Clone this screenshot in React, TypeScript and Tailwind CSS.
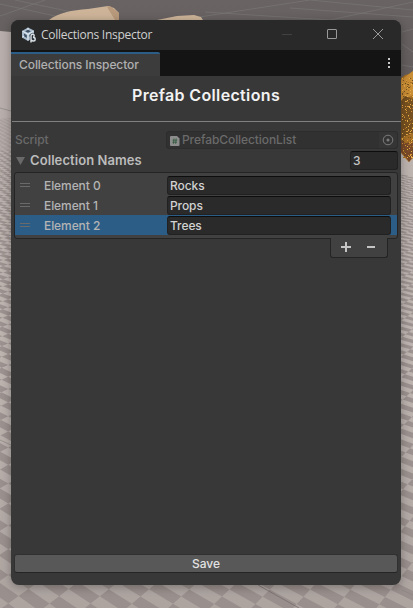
import React from "react";

// Checkered ground plane, projected with a horizon above the viewport.
function buildGround(): string {
  const horizon = -20;
  const depth = 615;
  const cx = 80;
  const project = (i: number, j: number): [number, number, number] => {
    const x = 68.5 + 22 * i - 9.3 * j;
    const y = 589 + 14.5 * i + 7.2 * j;
    const w = 1 / (1 - (y - 595) / depth);
    return [cx + (x - cx) * w, horizon + depth * w, w];
  };
  const parts: string[] = [];
  for (let i = -75; i < 30; i++) {
    for (let j = -150; j < 80; j++) {
      if ((i + j) % 2 === 0) continue;
      const p = [project(i, j), project(i + 1, j), project(i + 1, j + 1), project(i, j + 1)];
      const [x, y, w] = p[0];
      if (w <= 0 || y < 100 || y > 640 || x < -40 || x > 440) continue;
      if (x > 22 && x < 375 && y < 565) continue;
      parts.push("M" + p.map((q) => `${q[0].toFixed(1)} ${q[1].toFixed(1)}`).join("L") + "Z");
    }
  }
  return parts.join("");
}

const ground = buildGround();
const leafColors = ["#d99a3b", "#6b4a1c", "#e9b04a", "#a87328", "#7a5420"];
const leaves = Array.from({ length: 260 }, (_, n) => {
  const r = Math.abs(Math.sin(n * 12.9898) * 43758.5453) % 1;
  const s = Math.abs(Math.sin(n * 78.233) * 12543.123) % 1;
  const t = Math.abs(Math.sin(n * 39.425) * 9631.77) % 1;
  return { x: 402 + Math.floor(r * 11), y: 78 + Math.floor(s * 80), c: leafColors[Math.floor(t * 5)] };
});

function Scene() {
  return (
    <svg className="absolute inset-0" width="413" height="608" viewBox="0 0 413 608">
      <defs>
        <linearGradient id="floor" x1="0" y1="0" x2="0" y2="1">
          <stop offset="0" stopColor="#bcb3af" />
          <stop offset="0.6" stopColor="#bdb4b0" />
          <stop offset="1" stopColor="#ada4a0" />
        </linearGradient>
        <linearGradient id="sky" x1="0" y1="0" x2="0" y2="1">
          <stop offset="0" stopColor="#696463" />
          <stop offset="1" stopColor="#625d5c" />
        </linearGradient>
      </defs>
      <rect width="413" height="608" fill="url(#floor)" />
      <path d={ground} fill="#938a87" opacity="0.8" />
      <rect y="31" width="11" height="120" fill="#b3aaa7" opacity="0.5" />
      <path d="M0 0H413V76L401 82V30H11V32L0 31Z" fill="url(#sky)" />
      <g stroke="#7b7777" strokeWidth="0.8" fill="none" opacity="0.8">
        <path d="M0 4L60 17M15 0L105 19M0 16L45 0M180 20L310 0M205 12L330 20M290 8L413 17M310 0L413 10M330 20L413 2M402 32L413 29M402 44L413 52M402 65L413 67" />
      </g>
      <path d="M49 20C58 13 72 10 88 9L108 6L114 8L119 13V20Z" fill="#cdb499" />
      <path d="M107 7L110 6L119 13V20H115Z" fill="#b8997b" />
      <path d="M157 20L177 16L194 15L201 17L203 20Z" fill="#cdb499" />
      <path d="M401 78L405 75L409 74L413 71V158L409 162L406 159L401 153Z" fill="#a66f26" />
      <path d="M401 80L413 71V95L401 101Z" fill="#c98d35" />
      <path d="M401 101L405 96L413 99V133L401 138Z" fill="#765020" />
      <path d="M401 140L405 143L413 142V156L409 162L406 157L401 152Z" fill="#7a492a" />
      {leaves.map((l, n) => (
        <rect key={n} x={l.x} y={l.y} width="1" height="1" fill={l.c} />
      ))}
      <path d="M258 585L299 608" stroke="#77706e" strokeWidth="0.8" />
      <path d="M0 108L11 111M0 440L11 445M402 197L413 199M402 590L413 595" stroke="#8b8684" strokeWidth="0.7" />
    </svg>
  );
}

function UnityLogo() {
  return (
    <svg width="16" height="16" viewBox="0 0 16 16" className="shrink-0">
      <path d="M7 0.5L13 3.5V10L7 14L1 10.5V4Z" fill="#a9bccd" />
      <path d="M7 2.8L9.8 4.3L7 5.8L4.2 4.3ZM3 6.6L5.8 8.2V11L3 9.3ZM8.4 8L11 6.6V8L8.4 9.8Z" fill="#3d4f60" />
      <path d="M7 0.8V3M1.2 10.3L3.2 9M1.5 4.2L7 7.2L12.5 4.2M7 7V13.5" stroke="#e4edf5" strokeWidth="1" fill="none" />
      <path d="M10 15.4V9Q10 7.3 11.7 7.3Q13.2 7.3 13.2 8.7Q13.2 10.1 12 10.2Q14.2 10.4 14.2 12.2Q14.2 14 12.4 14Q11 14 10.2 13" fill="#27323b" stroke="#27323b" strokeWidth="2.2" />
      <path d="M10 15.4V9Q10 7.3 11.7 7.3Q13.2 7.3 13.2 8.7Q13.2 10.1 12 10.2Q14.2 10.4 14.2 12.2Q14.2 14 12.4 14Q11 14 10.2 13" fill="none" stroke="#dcdfe2" strokeWidth="1.4" />
    </svg>
  );
}

function Field({ value }: { value: string }) {
  return (
    <div className="flex h-[19px] w-[224px] items-center rounded-[3px] border border-[#212121] border-t-[#0d0d0d] bg-[#2a2a2a] px-[2px] pt-px text-[#d2d2d2]">
      {value}
    </div>
  );
}

function ElementRow({ label, value, selected = false }: { label: string; value: string; selected?: boolean }) {
  return (
    <div className={`flex h-5 items-center text-[#b4b4b4] ${selected ? "bg-[#2c5d87]" : ""}`}>
      <div className="ml-[5px] h-1 w-[10px] border-y border-[#6a6a6a]" />
      <div className="ml-[14px] w-[123px] pt-px">{label}</div>
      <Field value={value} />
    </div>
  );
}

export default function App() {
  return (
    <div className="relative h-[608px] w-[413px] overflow-hidden font-['Inter',sans-serif] text-[12px] leading-4 font-medium tracking-[-0.08px]">
      <Scene />
      <div className="relative px-[11px] pt-5">
        <div className="flex h-[565px] w-[390px] flex-col overflow-hidden rounded-[8px] bg-[#383838] shadow-[0_2px_10px_rgba(0,0,0,0.3)]">
          <div className="flex h-[30px] shrink-0 items-center bg-[#292929] pl-[10px] font-['Open_Sans','Noto_Sans',sans-serif] text-[12px] font-normal tracking-[-0.27px] text-[#d0d0d0]">
            <UnityLogo />
            <span className="ml-1">Collections Inspector</span>
            <svg className="ml-auto" width="121" height="30" viewBox="0 0 121 30" fill="none">
              <path d="M2 14.5H12" stroke="#414141" />
              <rect x="47.5" y="9.5" width="9" height="9" rx="0.5" stroke="#999" />
              <path d="M93 9L103 19M103 9L93 19" stroke="#999" />
            </svg>
          </div>
          <div className="flex h-[26px] shrink-0 items-end justify-between bg-[#141414]">
            <div className="flex h-6 w-[149px] items-center rounded-tr-[2px] border-t-2 border-[#2c5d87] bg-[#3c3c3c] pl-2 text-[#b0b0b0]">
              Collections Inspector
            </div>
            <div className="mr-[11px] mb-2 flex flex-col gap-[2px]">
              <i className="size-[2px] bg-[#c8c8c8]" />
              <i className="size-[2px] bg-[#c8c8c8]" />
              <i className="size-[2px] bg-[#c8c8c8]" />
            </div>
          </div>
          <div className="flex h-[45px] shrink-0 justify-center pt-[9px] text-[16px] leading-5 font-semibold tracking-[0.35px] text-[#f2f2f2]">
            Prefab Collections
          </div>
          <div className="ml-px h-px shrink-0 bg-[#808080]" />
          <div className="mt-[9px] flex h-[18px] shrink-0 items-center pl-1 text-[#6a6a6a]">
            <span className="w-[151px]">Script</span>
            <div className="flex h-[18px] w-[232px] items-center rounded-[3px] border border-[#2d2d2d] bg-[#313131] pl-[3px]">
              <svg width="10" height="10" viewBox="0 0 10 10" className="mt-[2px]">
                <path d="M1 0H7L9.5 2.5V9Q9.5 10 8.5 10H1Q0 10 0 9V1Q0 0 1 0Z" fill="#8d8d8d" />
                <path d="M4 2.5L3.4 7.8M6.2 2.5L5.6 7.8M2.6 4.2H7.2M2.4 6.2H7" stroke="#365c42" strokeWidth="0.9" />
              </svg>
              <span className="ml-[2px]">PrefabCollectionList</span>
              <span className="ml-auto flex h-4 w-[18px] items-center justify-center rounded-r-[3px] bg-[#353535]">
                <svg width="12" height="12" viewBox="0 0 12 12">
                  <circle cx="6" cy="6" r="4.8" fill="none" stroke="#7c7c7c" />
                  <circle cx="6" cy="6" r="1.5" fill="#7c7c7c" />
                </svg>
              </span>
            </div>
          </div>
          <div className="mt-[2px] flex h-[19px] shrink-0 items-center pl-[5px]">
            <svg width="9" height="8" viewBox="0 0 9 8">
              <path d="M0 0H9L4.5 8Z" fill="#696969" />
            </svg>
            <span className="ml-[5px] pb-px text-[13px] font-semibold tracking-[0.08px] text-[#bcbcbc]">Collection Names</span>
            <div className="mr-[3px] ml-auto flex h-[19px] w-12 items-center rounded-[3px] border border-[#212121] border-t-[#0d0d0d] bg-[#2a2a2a] px-[2px] text-[#c4c4c4]">
              3
            </div>
          </div>
          <div className="mt-[2px] ml-[3px] h-[67px] w-[384px] shrink-0 rounded-[3px] border border-[#242424] bg-[#414141] pt-[2px]">
            <ElementRow label="Element 0" value="Rocks" />
            <ElementRow label="Element 1" value="Props" />
            <ElementRow label="Element 2" value="Trees" selected />
          </div>
          <div className="relative -mt-px mr-[13px] ml-auto flex h-5 w-[58px] shrink-0 justify-between rounded-b-[3px] border border-t-0 border-[#242424] bg-[#414141] px-[10px]">
            <svg width="36" height="19" viewBox="0 0 36 19" fill="#c4c4c4">
              <path d="M4 4H6V8H10V10H6V14H4V10H0V8H4ZM26 8H34V10H26Z" />
            </svg>
          </div>
          <div className="mt-auto mb-[12px] ml-[3px] flex h-[19px] w-[384px] shrink-0 items-center justify-center rounded-[3px] border border-[#303030] border-b-[#242424] bg-[#585858] text-[#e2e2e2]">
            Save
          </div>
        </div>
      </div>
    </div>
  );
}
